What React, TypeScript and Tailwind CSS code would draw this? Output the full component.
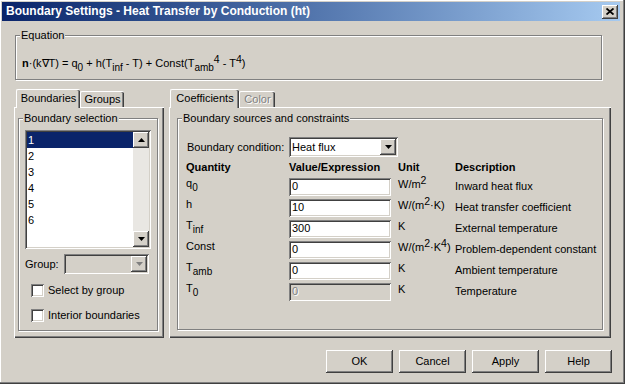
import React from "react";

const raised =
  "bg-[#d4d0c8] shadow-[inset_-1px_-1px_#404040,inset_1px_1px_#ffffff,inset_-2px_-2px_#808080,inset_2px_2px_#d4d0c8]";
const sunken =
  "shadow-[inset_1px_1px_#808080,inset_-1px_-1px_#ffffff,inset_2px_2px_#404040,inset_-2px_-2px_#d4d0c8]";
const etched = "border border-[#808080] shadow-[inset_1px_1px_#ffffff,1px_1px_#ffffff]";
const panel = "bg-[#d4d0c8] shadow-[inset_1px_1px_#ffffff,inset_-1px_-1px_#404040,inset_-2px_-2px_#808080]";

const Sub = ({ children }: { children: React.ReactNode }) => (
  <span className="relative top-[4px] text-[10px] leading-none">{children}</span>
);
const Sup = ({ children }: { children: React.ReactNode }) => (
  <span className="relative -top-[4px] text-[10.5px] leading-none">{children}</span>
);

const Arrow = ({ up = false, disabled = false }: { up?: boolean; disabled?: boolean }) => (
  <svg width="7" height="4" viewBox="0 0 7 4" className={up ? "rotate-180" : ""}>
    <polygon points="0,0 7,0 3.5,4" fill={disabled ? "#808080" : "#000000"} />
  </svg>
);

const GroupBox = ({ label, className, children }: { label: string; className: string; children?: React.ReactNode }) => (
  <div className={`relative ${etched} ${className}`}>
    <span className="absolute -top-[8px] left-[4px] px-[1px] bg-[#d4d0c8] leading-[14px]">{label}</span>
    {children}
  </div>
);

const Tab = ({ label, selected, disabled, w }: { label: string; selected?: boolean; disabled?: boolean; w: string }) => (
  <div
    className={`${w} flex items-center justify-center rounded-t-[2px] border-l border-t border-white shadow-[inset_-1px_0_#404040,inset_-2px_0_#808080] ${
      selected ? "h-[19px] relative z-10 -mb-[1px] bg-[#d4d0c8] pb-[1px]" : "h-[16px] bg-[#d4d0c8]"
    } ${disabled ? "text-[#808080] [text-shadow:1px_1px_#ffffff]" : ""}`}
  >
    {label}
  </div>
);

const Checkbox = ({ label }: { label: string }) => (
  <div className="flex items-center gap-[4px] pl-[12px] h-[13px]">
    <div className={`w-[13px] h-[13px] bg-white ${sunken}`} />
    <span>{label}</span>
  </div>
);

const Field = ({ value, disabled }: { value: string; disabled?: boolean }) => (
  <div
    className={`w-[102px] h-[18px] flex items-center pl-[3px] ${sunken} ${
      disabled ? "bg-[#d4d0c8] text-[#808080] [text-shadow:1px_1px_#ffffff]" : "bg-white"
    }`}
  >
    {value}
  </div>
);

const rows: { q: React.ReactNode; v: string; u: React.ReactNode; d: string; disabled?: boolean }[] = [
  { q: <>q<Sub>0</Sub></>, v: "0", u: <>W/m<Sup>2</Sup></>, d: "Inward heat flux" },
  { q: "h", v: "10", u: <>W/(m<Sup>2</Sup>·K)</>, d: "Heat transfer coefficient" },
  { q: <>T<Sub>inf</Sub></>, v: "300", u: "K", d: "External temperature" },
  { q: "Const", v: "0", u: <>W/(m<Sup>2</Sup>·K<Sup>4</Sup>)</>, d: "Problem-dependent constant" },
  { q: <>T<Sub>amb</Sub></>, v: "0", u: "K", d: "Ambient temperature" },
  { q: <>T<Sub>0</Sub></>, v: "0", u: "K", d: "Temperature", disabled: true },
];

export default function App() {
  return (
    <div className="w-[625px] h-[384px] bg-[#d4d0c8] text-[11px] leading-[13px] text-black font-['Liberation_Sans',Arial,sans-serif] flex flex-col overflow-hidden pr-[5px] shadow-[inset_-1px_-1px_#404040,inset_-2px_-2px_#808080,inset_1px_1px_#ffffff]">
      {/* Title bar */}
      <div className="mt-[2px] ml-[2px] h-[19px] flex items-center justify-between pl-[4px] pr-[2px] bg-gradient-to-r from-[#0a246a] to-[#a6caf0]">
        <span className="text-white font-bold text-[12px]">Boundary Settings - Heat Transfer by Conduction (ht)</span>
        <div className={`w-[16px] h-[14px] flex items-center justify-center ${raised}`}>
          <svg width="8" height="7" viewBox="0 0 8 7">
            <path d="M0.5 0.5 L7.5 6.5 M7.5 0.5 L0.5 6.5" stroke="#000" strokeWidth="1.8" />
          </svg>
        </div>
      </div>

      {/* Equation */}
      <GroupBox label="Equation" className="ml-[15px] mt-[14px] w-[587px] h-[45px] shrink-0">
        <div className="pl-[6px] pt-[21px] text-[11px]">
          <b>n</b>·(k∇T) = q<Sub>0</Sub> + h(T<Sub>inf</Sub> - T) + Const(T<Sub>amb</Sub>
          <Sup>4</Sup> - T<Sup>4</Sup>)
        </div>
      </GroupBox>

      <div className="flex ml-[14px] mt-[9px]">
        {/* Left column */}
        <div className="w-[150px] flex flex-col">
          <div className="flex items-end h-[18px] pl-[2px]">
            <Tab label="Boundaries" selected w="w-[64px]" />
            <Tab label="Groups" w="w-[44px]" />
          </div>
          <div className={`h-[231px] pl-[4px] pt-[11px] ${panel}`}>
            <GroupBox label="Boundary selection" className="w-[140px] h-[213px]">
              <div className={`ml-[6px] mt-[11px] w-[126px] h-[119px] flex p-[2px] bg-white ${sunken}`}>
                <div className="flex-1 flex flex-col">
                  {["1", "2", "3", "4", "5", "6"].map((n, i) => (
                    <div
                      key={n}
                      className={`h-[16px] flex items-center pl-[1px] ${i === 0 ? "bg-[#0a246a] text-white" : ""}`}
                    >
                      {n}
                    </div>
                  ))}
                </div>
                <div className="w-[16px] flex flex-col bg-[#e9e7e3]">
                  <div className={`h-[16px] flex items-center justify-center ${raised}`}>
                    <Arrow up />
                  </div>
                  <div className="flex-1" />
                  <div className={`h-[16px] flex items-center justify-center ${raised}`}>
                    <Arrow />
                  </div>
                </div>
              </div>
              <div className="flex items-center mt-[5px] ml-[6px] h-[20px]">
                <span className="w-[39px]">Group:</span>
                <div className={`w-[85px] h-[20px] flex justify-end p-[2px] ${sunken}`}>
                  <div className={`w-[16px] h-full flex items-center justify-center ${raised}`}>
                    <Arrow disabled />
                  </div>
                </div>
              </div>
              <div className="mt-[10px]">
                <Checkbox label="Select by group" />
              </div>
              <div className="mt-[12px]">
                <Checkbox label="Interior boundaries" />
              </div>
            </GroupBox>
          </div>
        </div>

        {/* Right column */}
        <div className="w-[442px] ml-[5px] flex flex-col">
          <div className="flex items-end h-[18px] pl-[1px]">
            <Tab label="Coefficients" selected w="w-[69px]" />
            <Tab label="Color" disabled w="w-[36px]" />
          </div>
          <div className={`h-[231px] pl-[8px] pt-[11px] ${panel}`}>
            <GroupBox label="Boundary sources and constraints" className="w-[426px] h-[212px]">
              <div className="pl-[8px] pt-[18px]">
                <div className="flex items-center h-[20px]">
                  <span className="w-[103px] pl-[1px]">Boundary condition:</span>
                  <div className={`w-[109px] h-[20px] flex items-center justify-between p-[2px] bg-white ${sunken}`}>
                    <span className="pl-[1px]">Heat flux</span>
                    <div className={`w-[16px] h-full flex items-center justify-center ${raised}`}>
                      <Arrow />
                    </div>
                  </div>
                </div>
                <div className="grid grid-cols-[103px_109px_57px_1fr] mt-[1px]">
                  {["Quantity", "Value/Expression", "Unit", "Description"].map((h) => (
                    <div key={h} className="h-[18px] flex items-center font-bold">
                      {h}
                    </div>
                  ))}
                  {rows.map((r, i) => (
                    <React.Fragment key={i}>
                      <div className="h-[21px] flex items-center -mt-[3px]">
                        <span>{r.q}</span>
                      </div>
                      <div className="h-[21px] flex items-center">
                        <Field value={r.v} disabled={r.disabled} />
                      </div>
                      <div className="h-[21px] flex items-center -mt-[2px] whitespace-nowrap">
                        <span>{r.u}</span>
                      </div>
                      <div className="h-[21px] flex items-center whitespace-nowrap">{r.d}</div>
                    </React.Fragment>
                  ))}
                </div>
              </div>
            </GroupBox>
          </div>
        </div>
      </div>

      {/* Buttons */}
      <div className="flex justify-end gap-[6px] mt-[12px] mr-[8px]">
        {["OK", "Cancel", "Apply", "Help"].map((b) => (
          <div key={b} className={`w-[67px] h-[23px] flex items-center justify-center ${raised}`}>
            {b}
          </div>
        ))}
      </div>
    </div>
  );
}
